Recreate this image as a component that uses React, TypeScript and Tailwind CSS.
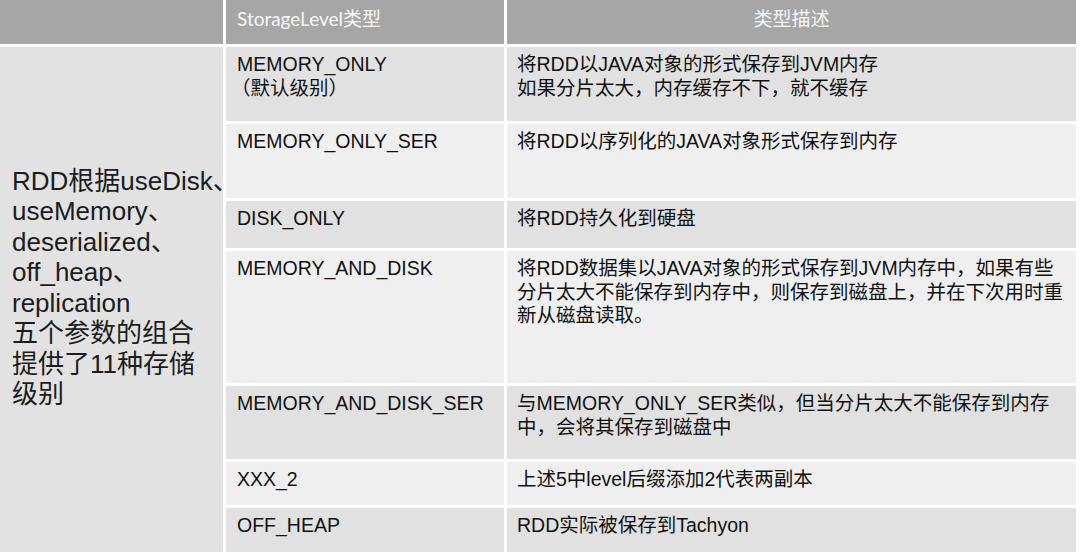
import React from "react";

const font = { fontFamily: '"Liberation Sans", "Noto Sans CJK SC", sans-serif' };

const rows: { name: React.ReactNode; desc: React.ReactNode; dark: boolean }[] = [
  {
    name: (
      <>
        MEMORY_ONLY
        <br />
        <span className="-ml-[6px]">（默认级别）</span>
      </>
    ),
    desc: (
      <>
        将RDD以JAVA对象的形式保存到JVM内存
        <br />
        如果分片太大，内存缓存不下，就不缓存
      </>
    ),
    dark: true,
  },
  { name: "MEMORY_ONLY_SER", desc: "将RDD以序列化的JAVA对象形式保存到内存", dark: false },
  { name: "DISK_ONLY", desc: "将RDD持久化到硬盘", dark: true },
  {
    name: "MEMORY_AND_DISK",
    desc: (
      <>
        将RDD数据集以JAVA对象的形式保存到JVM内存中，如果有些
        <br />
        分片太大不能保存到内存中，则保存到磁盘上，并在下次用时重
        <br />
        新从磁盘读取。
      </>
    ),
    dark: false,
  },
  {
    name: "MEMORY_AND_DISK_SER",
    desc: (
      <>
        与MEMORY_ONLY_SER类似，但当分片太大不能保存到内存
        <br />
        中，会将其保存到磁盘中
      </>
    ),
    dark: true,
  },
  { name: "XXX_2", desc: "上述5中level后缀添加2代表两副本", dark: false },
  { name: "OFF_HEAP", desc: "RDD实际被保存到Tachyon", dark: true },
];

export default function App() {
  return (
    <div className="w-[1080px] h-[554px] bg-white overflow-hidden" style={font}>
      <div className="grid w-[1076px] grid-cols-[223px_278px_569px] grid-rows-[44px_74px_74px_47px_132px_73px_43px_44px] gap-[3px]">
        <div className="bg-[#a6a6a6]" />
        <div
          className="bg-[#a6a6a6] pl-[11px] pt-[7px] text-[19px] leading-[24px] text-[#f7f7f7]"
          style={{ fontFamily: '"Lato", "Noto Sans CJK SC", sans-serif' }}
        >
          StorageLevel类型
        </div>
        <div
          className="bg-[#a6a6a6] pt-[7px] text-center text-[19px] leading-[24px] text-[#f7f7f7]"
          style={{ fontFamily: '"Lato", "Noto Sans CJK SC", sans-serif' }}
        >
          类型描述
        </div>

        <div className="row-span-7 row-start-2 col-start-1 flex flex-col justify-center bg-[#e2e2e2] pb-[24px] pl-[12px] text-[26px] leading-[30.5px] text-[#1c1c1c] whitespace-nowrap">
          <div>RDD根据useDisk、</div>
          <div>useMemory、</div>
          <div>deserialized、</div>
          <div>off_heap、</div>
          <div>replication</div>
          <div>五个参数的组合</div>
          <div>提供了11种存储</div>
          <div>级别</div>
        </div>

        {rows.map((r, i) => (
          <React.Fragment key={i}>
            <div
              className={`col-start-2 pl-[11px] pt-[6px] text-[19.5px] leading-[23.5px] text-[#111111] whitespace-nowrap ${
                r.dark ? "bg-[#e1e1e1]" : "bg-[#efefef]"
              }`}
            >
              {r.name}
            </div>
            <div
              className={`col-start-3 pl-[10px] pt-[6px] text-[19.5px] leading-[23.5px] text-[#111111] whitespace-nowrap ${
                r.dark ? "bg-[#e1e1e1]" : "bg-[#efefef]"
              }`}
            >
              {r.desc}
            </div>
          </React.Fragment>
        ))}
      </div>
    </div>
  );
}
